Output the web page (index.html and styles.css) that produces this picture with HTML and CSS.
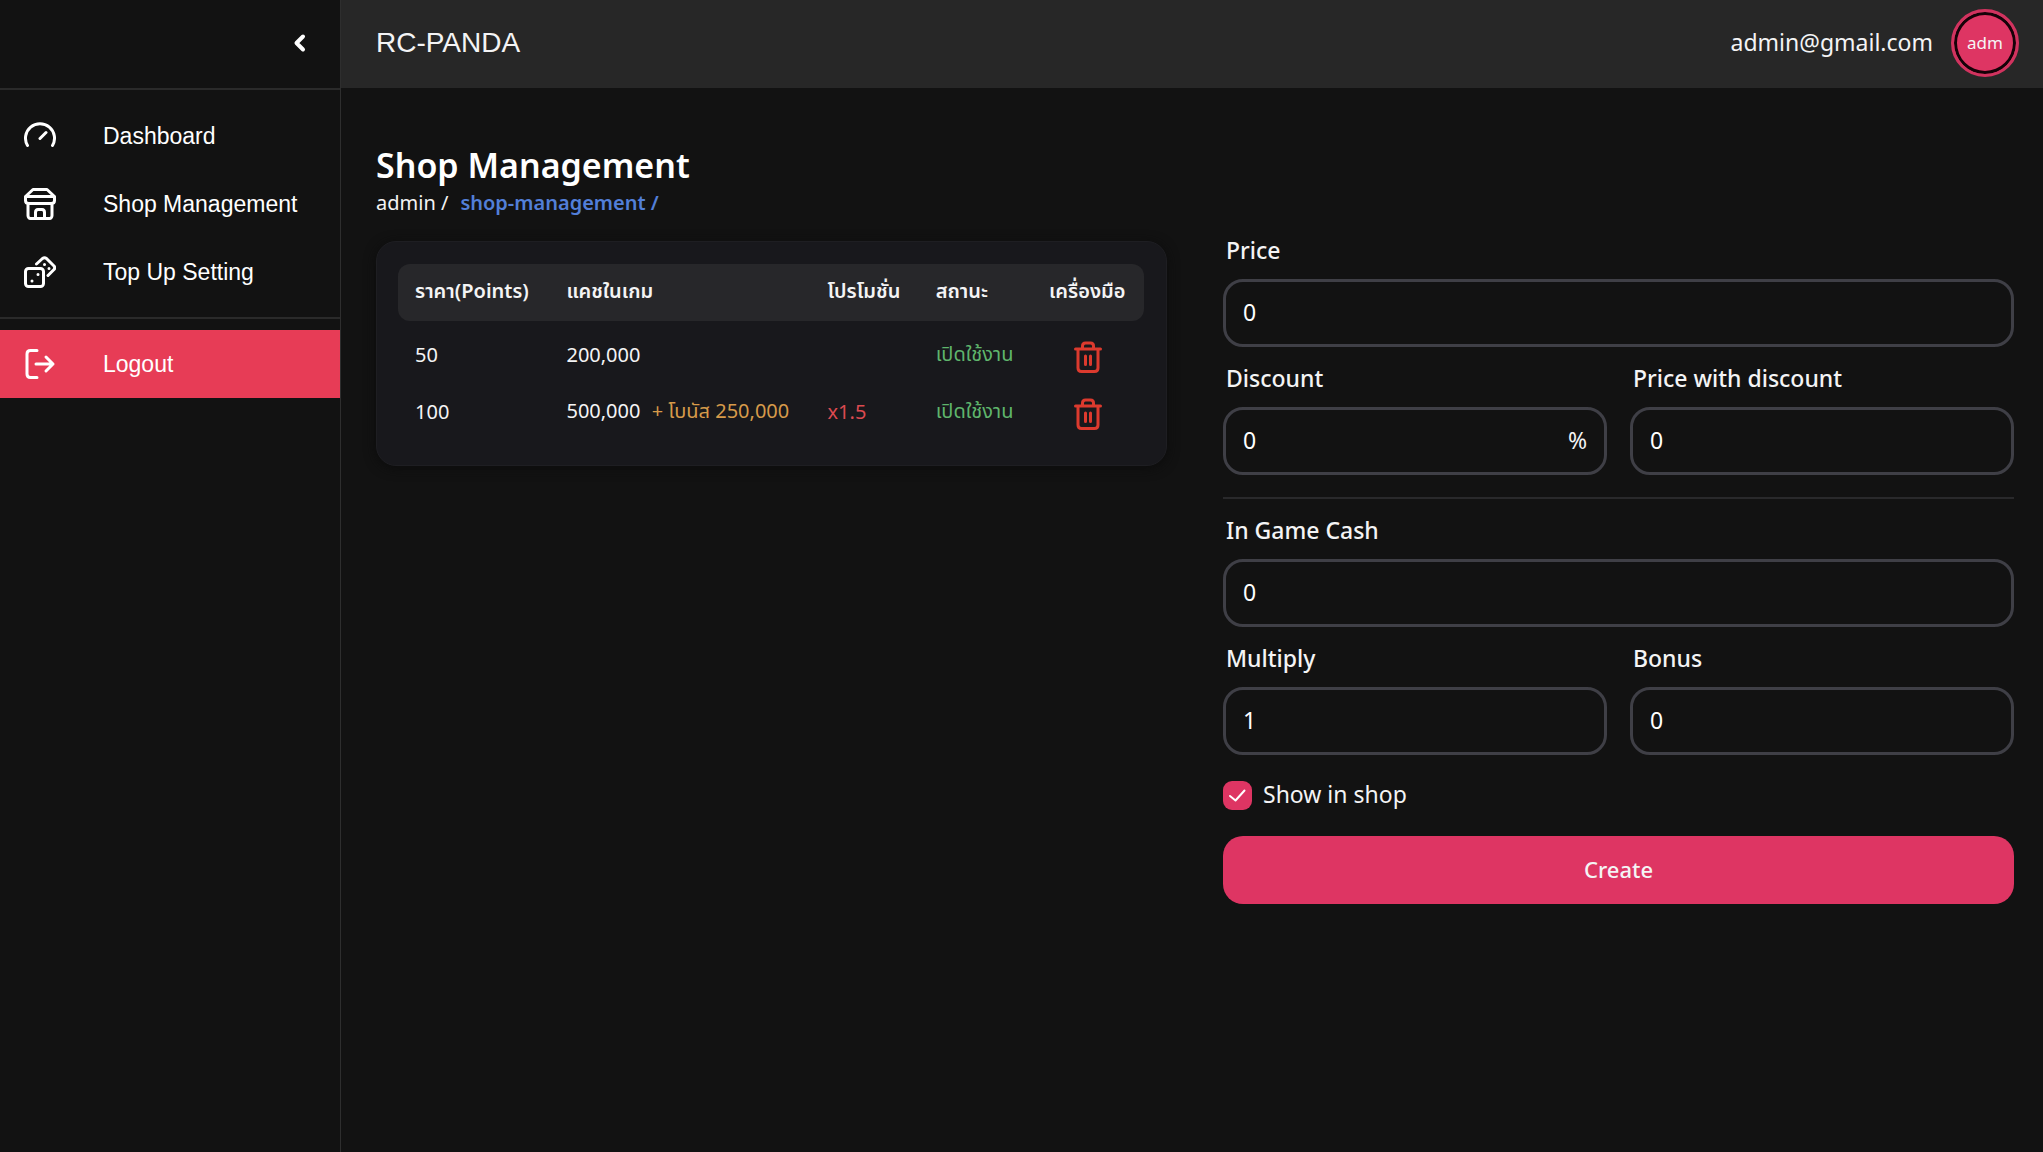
FILE: index.html
```html
<!DOCTYPE html>
<html lang="en">
<head>
<meta charset="utf-8">
<meta name="viewport" content="width=device-width, initial-scale=1">
<title>RC-PANDA</title>
<link rel="stylesheet" href="styles.css">
</head>
<body>
<div class="app">
  <aside class="sidebar">
    <div class="sidebar-top">
      <button class="collapse" type="button" aria-label="Collapse menu">
        <svg class="chevron" viewBox="0 0 24 24"><path d="M15 5.500L8.500 12L15 18.500"/></svg>
      </button>
    </div>
    <nav>
      <ul class="menu">
        <li><a class="menu-item" href="#">
          <svg class="menu-icon" viewBox="0 0 32 32"><path d="M3.500 25.500A14.500 14.500 0 1 1 28.500 25.500M16 18.500L22 12.500"/></svg>
          <span>Dashboard</span></a></li>
        <li><a class="menu-item" href="#">
          <svg class="menu-icon" viewBox="0 0 32 32"><path d="M9 1.500H23L30.500 8.500V12.500C30.500 14.500 29 15.500 27 15.500H5C3 15.500 1.500 14.500 1.500 12.500V8.500ZM1.500 8.500H30.500M4 16V27.500C4 29 5 30.500 6.500 30.500H25.500C27 30.500 28 29 28 27.500V16M11.500 30.500V24.500C11.500 22.500 12.500 21.500 14 21.500H18C19.500 21.500 20.500 22.500 20.500 24.500V30.500"/></svg>
          <span>Shop Management</span></a></li>
        <li><a class="menu-item" href="#">
          <svg class="menu-icon" viewBox="0 0 32 32"><rect x="1.500" y="12.500" width="18" height="18" rx="3"/><path d="M12.500 8L18.500 2.500Q20.500 1 22.500 2.500L30 10Q31.500 12 30 13.500L24 19.500"/><path d="M8 25h.010M14 18.500h.010M20.500 8.500h.010M25 12.500h.010"/></svg>
          <span>Top Up Setting</span></a></li>
      </ul>
      <ul class="menu menu-end">
        <li><a class="menu-item logout" href="#">
          <svg class="menu-icon" viewBox="0 0 32 32"><path d="M13 2.500H6.500Q3 2.500 3 6V26Q3 29.500 6.500 29.500H13M12 16H29M22 9L29 16L22 23"/></svg>
          <span>Logout</span></a></li>
      </ul>
    </nav>
  </aside>
  <div class="page">
    <header class="topbar">
      <div class="brand">RC-PANDA</div>
      <div class="account">
        <span class="email">admin@gmail.com</span>
        <span class="avatar">adm</span>
      </div>
    </header>
    <main class="content">
      <h1>Shop Management</h1>
      <div class="crumbs"><a href="#">admin /</a><a class="current" href="#">shop-management /</a></div>
      <div class="columns">
        <section class="card">
          <table>
            <colgroup><col class="c-price"><col class="c-cash"><col class="c-promo"><col class="c-status"><col></colgroup>
            <thead>
              <tr><th>ราคา(Points)</th><th>แคชในเกม</th><th>โปรโมชั่น</th><th>สถานะ</th><th>เครื่องมือ</th></tr>
            </thead>
            <tbody>
              <tr>
                <td>50</td><td>200,000</td><td></td><td class="active">เปิดใช้งาน</td>
                <td class="tools"><button class="delete" type="button" aria-label="Delete"><svg class="trash" viewBox="0 0 28 32"><path d="M1.500 8H26.500M8.500 7.500V5Q8.500 2 11.500 2H16.500Q19.500 2 19.500 5V7.500M4 8V27Q4 30.500 7.500 30.500H20.500Q24 30.500 24 27V8M11.500 15V23.500M16.500 15V23.500"/></svg></button></td>
              </tr>
              <tr>
                <td>100</td><td>500,000 <span class="bonus">+ โบนัส 250,000</span></td><td class="promo">x1.5</td><td class="active">เปิดใช้งาน</td>
                <td class="tools"><button class="delete" type="button" aria-label="Delete"><svg class="trash" viewBox="0 0 28 32"><path d="M1.500 8H26.500M8.500 7.500V5Q8.500 2 11.500 2H16.500Q19.500 2 19.500 5V7.500M4 8V27Q4 30.500 7.500 30.500H20.500Q24 30.500 24 27V8M11.500 15V23.500M16.500 15V23.500"/></svg></button></td>
              </tr>
            </tbody>
          </table>
        </section>
        <form class="form">
          <div class="field"><label for="price">Price</label><div class="box"><input id="price" type="text" value="0"></div></div>
          <div class="pair">
            <div class="field"><label for="discount">Discount</label><div class="box"><input id="discount" type="text" value="0"><span>%</span></div></div>
            <div class="field"><label for="net">Price with discount</label><div class="box"><input id="net" type="text" value="0"></div></div>
          </div>
          <hr>
          <div class="field"><label for="cash">In Game Cash</label><div class="box"><input id="cash" type="text" value="0"></div></div>
          <div class="pair">
            <div class="field"><label for="multiply">Multiply</label><div class="box"><input id="multiply" type="text" value="1"></div></div>
            <div class="field"><label for="bonus">Bonus</label><div class="box"><input id="bonus" type="text" value="0"></div></div>
          </div>
          <div class="check"><span class="tick"><input id="show" type="checkbox" checked><svg viewBox="0 0 29 29"><path d="M7 15L12.500 19.500L21.500 9.500"/></svg></span><label for="show">Show in shop</label></div>
          <button class="create" type="submit">Create</button>
        </form>
      </div>
    </main>
  </div>
</div>
</body>
</html>
```
FILE: styles.css
```css
* { box-sizing: border-box; }
body {
  margin: 0;
  background: #121212;
  color: #f4f4f5;
  font-family: "Noto Sans", "Noto Sans Thai", sans-serif;
  font-size: 23px;
}
a { color: inherit; text-decoration: none; }
button { border: 0; padding: 0; background: none; color: inherit; font: inherit; cursor: pointer; }
svg { display: block; fill: none; stroke: currentColor; stroke-linecap: round; stroke-linejoin: round; }

.app { display: flex; min-height: 100vh; }
.sidebar {
  flex: none;
  width: 341px;
  border-right: 1px solid #2e2e2e;
  color: #fff;
  font-family: "Liberation Sans", Arial, sans-serif;
}
.sidebar-top {
  display: flex;
  align-items: center;
  justify-content: flex-end;
  height: 90px;
  padding: 0 28px 2px 0;
  border-bottom: 2px solid #2a2a2a;
}
.chevron { width: 24px; height: 24px; stroke-width: 4; }
.menu { margin: 0; padding: 12px 0 11px; list-style: none; }
.menu-end { padding-top: 11px; border-top: 2px solid #2a2a2a; }
.menu-item { display: flex; align-items: center; gap: 47px; height: 68px; padding: 0 24px; }
.menu-icon { width: 32px; height: 32px; stroke-width: 3; }
.logout { background: #e73c56; }

.page { flex: 1; min-width: 0; }
.topbar {
  display: flex;
  align-items: center;
  justify-content: space-between;
  height: 88px;
  padding: 0 24px 2px 35px;
  background: #272727;
}
.brand { font-family: "Liberation Sans", Arial, sans-serif; font-size: 28px; }
.account { display: flex; align-items: center; gap: 18px; }
.email { padding-bottom: 2px; }
.avatar {
  display: grid;
  place-items: center;
  width: 68px;
  height: 68px;
  padding-bottom: 2px;
  border: 3px solid #d1335f;
  border-radius: 50%;
  background: #de3563;
  box-shadow: inset 0 0 0 3px #160208;
  font-size: 17px;
}

.content { padding: 55px 29px 29px 35px; }
h1 { margin: 0; font-size: 34px; font-weight: 600; line-height: 44px; color: #fff; }
.crumbs { display: flex; gap: 12px; font-size: 20px; line-height: 32px; }
.current { color: #527fd8; font-weight: 600; }
.columns { display: grid; grid-template-columns: repeat(2, minmax(0, 1fr)); gap: 56px; align-items: start; margin-top: 22px; }

.card {
  padding: 22px 22px 24px 21px;
  border: 1px solid #1e1e22;
  border-radius: 20px;
  background: #18181c;
  box-shadow: 0 2px 12px #0c0c0c;
}
table { width: 100%; border-spacing: 0; table-layout: fixed; font-size: 20px; }
.c-price { width: 20.3%; }
.c-cash { width: 35%; }
.c-promo { width: 14.5%; }
.c-status { width: 15.2%; }
th, td { height: 57px; padding: 0 0 2px 17px; text-align: left; white-space: nowrap; }
th { background: #27272a; font-weight: 600; }
th:first-child { border-radius: 12px 0 0 12px; }
th:last-child { border-radius: 0 12px 12px 0; }
tbody::before { content: ""; display: table-row; height: 6px; }
.bonus { margin-left: 6px; color: #d69a4a; }
.promo { color: #dc4a50; }
.active { color: #5fb56c; }
.tools { padding: 2px 17px 0; }
.delete { display: block; margin: 0 auto; color: #dc3a2e; }
.trash { width: 28px; height: 32px; stroke-width: 3; }

.form { display: flex; flex-direction: column; gap: 22px; }
.pair { display: grid; grid-template-columns: repeat(2, minmax(0, 1fr)); gap: 23px; }
.field { display: flex; flex-direction: column; gap: 20px; }
.field label { padding-left: 3px; font-weight: 500; line-height: 18px; }
.box {
  display: flex;
  align-items: center;
  height: 68px;
  padding: 0 17px 2px;
  border: 3px solid #3f3f46;
  border-radius: 20px;
}
.box input { flex: 1; min-width: 0; padding: 0; border: 0; outline: 0; background: none; color: #fff; font: inherit; }
hr { width: 100%; height: 2px; margin: 0; border: 0; background: #29292b; }
.check { display: flex; align-items: center; gap: 11px; height: 37px; }
.check label { padding-bottom: 3px; }
.tick { display: grid; width: 29px; height: 29px; }
.tick input, .tick svg { grid-area: 1 / 1; width: 29px; height: 29px; margin: 0; }
.tick input { appearance: none; border-radius: 9px; background: #de3563; }
.tick svg { z-index: 1; pointer-events: none; stroke: #fff; stroke-width: 2; }
.create { height: 68px; padding-bottom: 2px; border-radius: 20px; background: #de3563; font-size: 22px; font-weight: 500; }
```
